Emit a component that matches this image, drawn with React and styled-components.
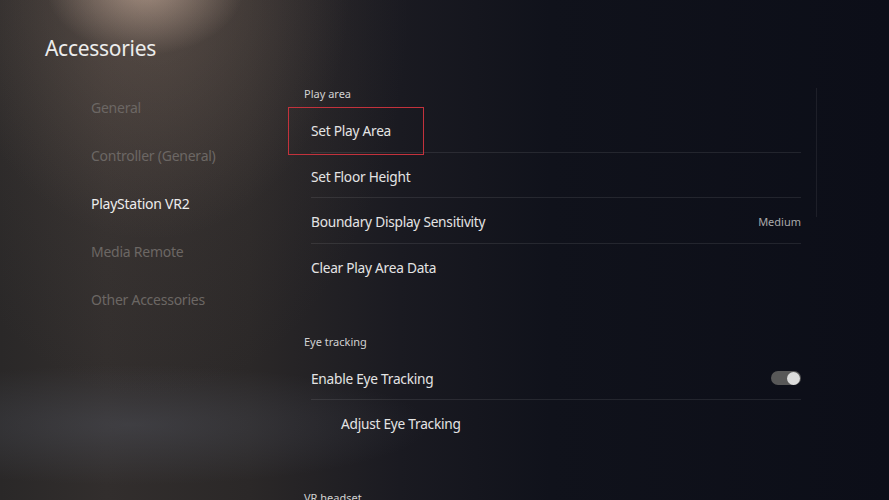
import React from "react";
import styled, { createGlobalStyle } from "styled-components";

const GlobalStyle = createGlobalStyle`
  html, body {
    margin: 0;
    padding: 0;
    background: #0d0f19;
  }
  * { box-sizing: border-box; }
`;

const Screen = styled.div`
  position: relative;
  width: 889px;
  height: 500px;
  overflow: hidden;
  font-family: "Noto Sans", "Open Sans", sans-serif;
  color: #e6e6e6;
  background:
    radial-gradient(ellipse 100px 70px at 145px -15px, rgba(225, 195, 175, 0.55), transparent 100%),
    radial-gradient(ellipse 200px 250px at 150px -10px, rgba(150, 126, 110, 0.3), transparent 100%),
    radial-gradient(ellipse 260px 400px at 150px 0px, rgba(110, 95, 88, 0.2), transparent 100%),
    radial-gradient(ellipse 300px 60px at 130px 425px, rgba(95, 102, 118, 0.3), transparent 100%),
    linear-gradient(to right, #2a2828 0%, #322e2d 12%, #2b2828 28%, #1a1a21 45%, #10121b 62%, #0c0e18 100%);
`;

const Title = styled.h1`
  margin: 0;
  padding: 34px 0 0 45px;
  font-size: 21px;
  font-weight: 400;
  letter-spacing: -0.3px;
  line-height: 28px;
  color: #ececec;
`;

const Body = styled.div`
  display: grid;
  grid-template-columns: 288px 513px;
  margin-top: 10px;
`;

const Nav = styled.nav`
  display: flex;
  flex-direction: column;
  padding: 12px 0 0 91px;
`;

const NavItem = styled.div`
  height: 48px;
  line-height: 48px;
  font-size: 14px;
  letter-spacing: -0.25px;
  color: ${(p) => (p.$active ? "#ececec" : "#6c6764")};
`;

const Content = styled.div`
  display: flex;
  flex-direction: column;
  padding-top: 15px;
`;

const Section = styled.section`
  display: flex;
  flex-direction: column;
  margin-bottom: 45px;
`;

const SectionLabel = styled.div`
  padding-left: 16px;
  font-size: 11px;
  line-height: 14px;
  margin-bottom: 6px;
  color: #d2d2d2;
`;

const Row = styled.div`
  position: relative;
  display: flex;
  align-items: center;
  justify-content: space-between;
  height: 45.7px;
  margin-left: 23px;
  padding-top: 2px;
  padding-left: ${(p) => (p.$indent ? "30px" : "0")};
  font-size: 13.7px;
  letter-spacing: -0.25px;
  color: #e4e4e4;
  border-bottom: 1px solid ${(p) => (p.$last ? "transparent" : "rgba(255,255,255,0.09)")};
`;

const Focus = styled.div`
  position: absolute;
  left: -23px;
  top: 0;
  width: 136px;
  height: 48px;
  border: 1.5px solid #c3323c;
`;

const Value = styled.span`
  font-size: 11px;
  letter-spacing: 0;
  color: #a9a9ab;
`;

const Toggle = styled.div`
  position: relative;
  width: 30px;
  height: 14px;
  border-radius: 7px;
  background: #585858;
  &::after {
    content: "";
    position: absolute;
    right: 1px;
    top: 0.5px;
    width: 13px;
    height: 13px;
    border-radius: 50%;
    background: #dcdcdc;
  }
`;

const Scrollbar = styled.div`
  position: absolute;
  left: 816px;
  top: 88px;
  width: 1px;
  height: 129px;
  background: rgba(255, 255, 255, 0.07);
`;

const navItems = [
  "General",
  "Controller (General)",
  "PlayStation VR2",
  "Media Remote",
  "Other Accessories",
];

export default function App() {
  return (
    <Screen>
      <GlobalStyle />
      <Title>Accessories</Title>
      <Body>
        <Nav>
          {navItems.map((item) => (
            <NavItem key={item} $active={item === "PlayStation VR2"}>
              {item}
            </NavItem>
          ))}
        </Nav>
        <Content>
          <Section>
            <SectionLabel>Play area</SectionLabel>
            <Row>
              <Focus />
              Set Play Area
            </Row>
            <Row>Set Floor Height</Row>
            <Row>
              Boundary Display Sensitivity
              <Value>Medium</Value>
            </Row>
            <Row $last>Clear Play Area Data</Row>
          </Section>
          <Section>
            <SectionLabel>Eye tracking</SectionLabel>
            <Row>
              Enable Eye Tracking
              <Toggle />
            </Row>
            <Row $indent $last>Adjust Eye Tracking</Row>
          </Section>
          <Section>
            <SectionLabel>VR headset</SectionLabel>
          </Section>
        </Content>
      </Body>
      <Scrollbar />
    </Screen>
  );
}
